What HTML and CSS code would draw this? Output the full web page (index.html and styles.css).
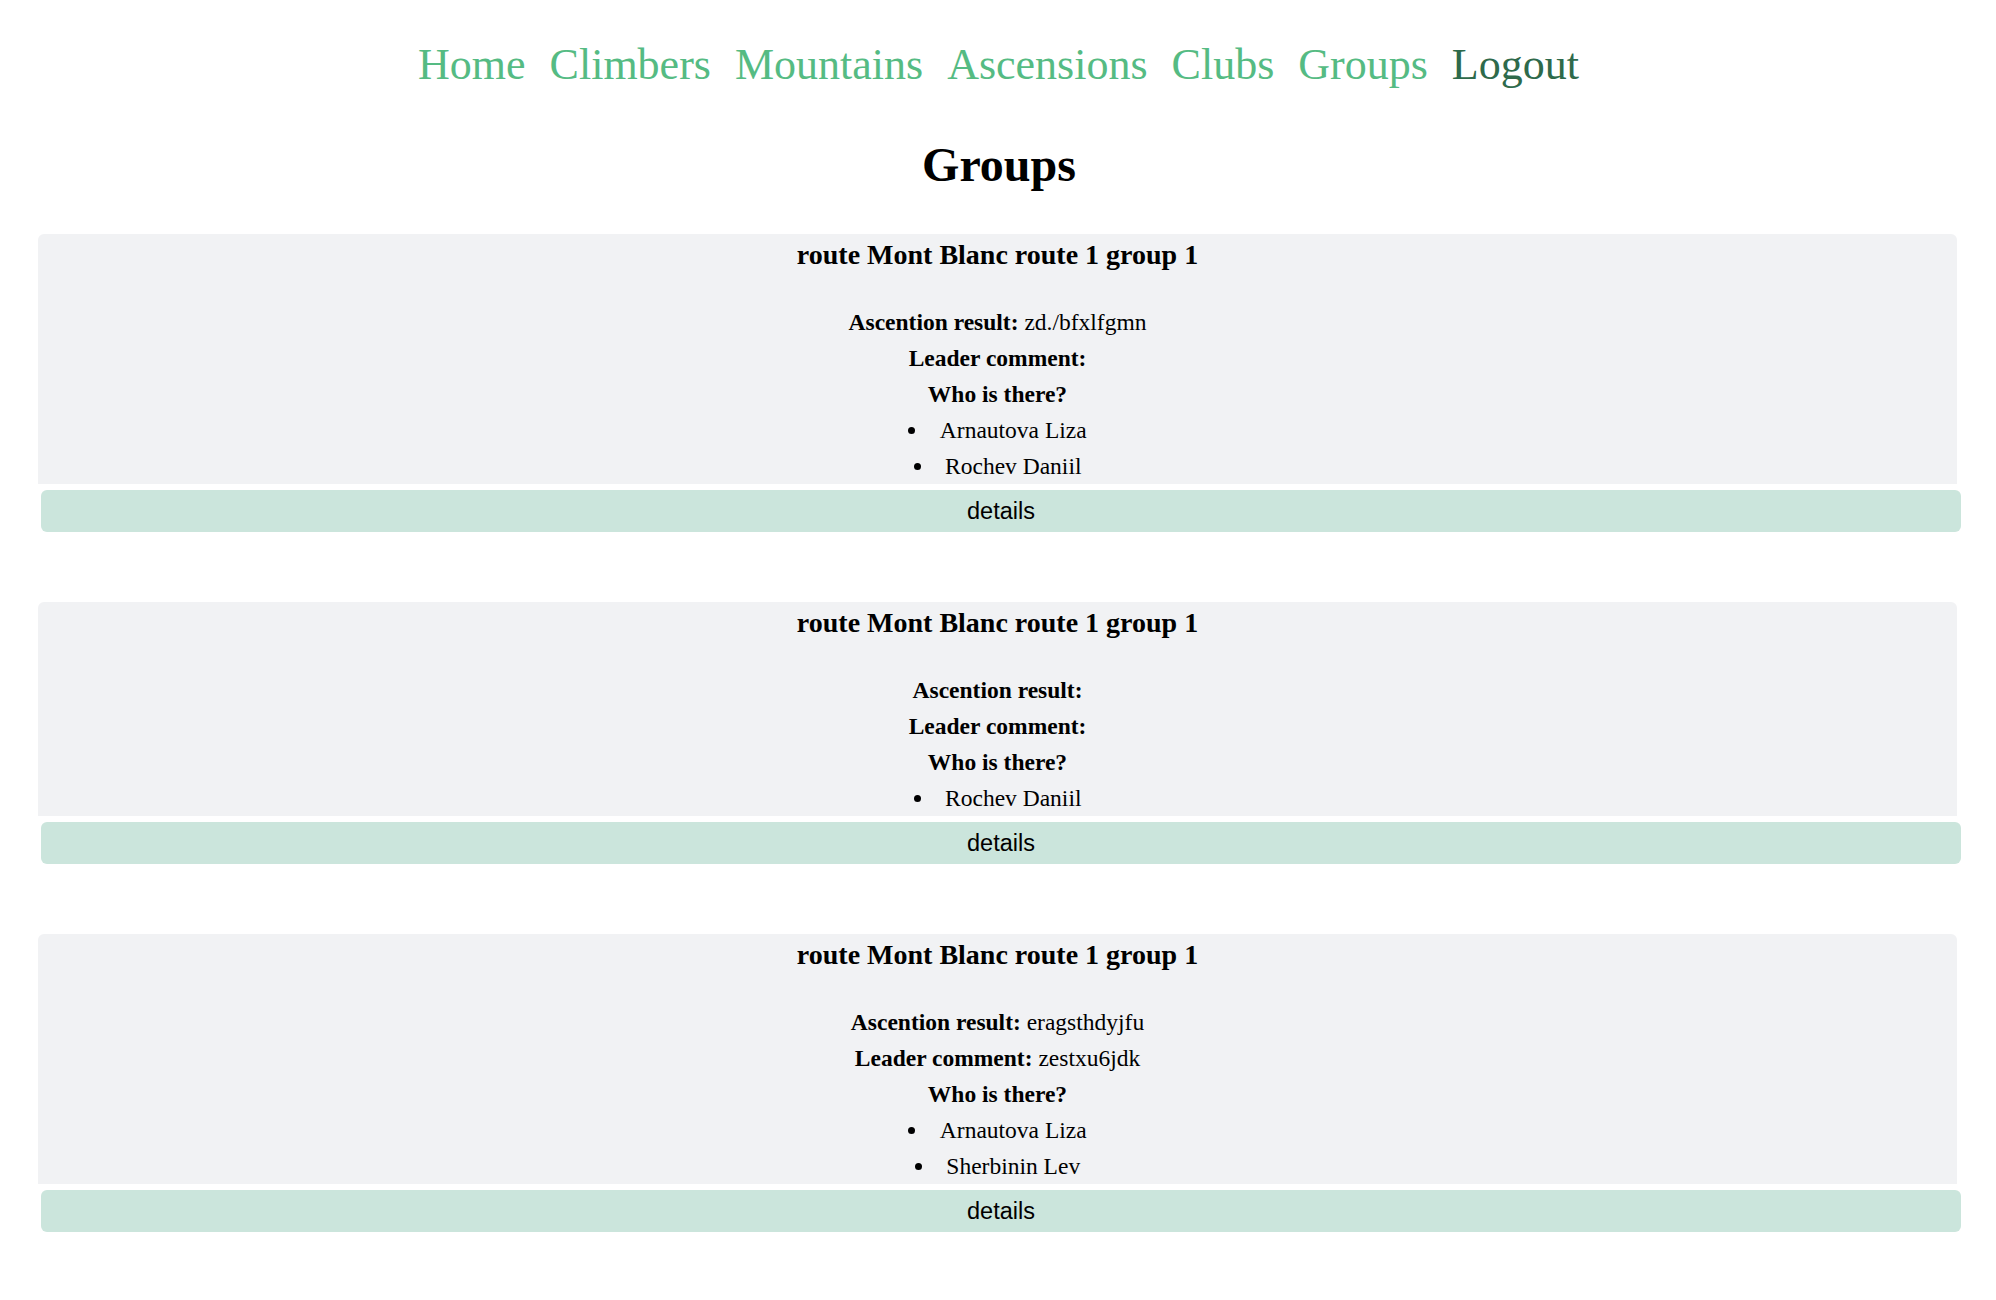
FILE: index.html
```html
<!DOCTYPE html>
<html>
<head>
<meta charset="utf-8">
<title>Groups</title>
<link rel="stylesheet" href="styles.css">
</head>
<body>
<nav class="nav">
  <a class="nav-link" href="#">Home</a>
  <a class="nav-link" href="#">Climbers</a>
  <a class="nav-link" href="#">Mountains</a>
  <a class="nav-link" href="#">Ascensions</a>
  <a class="nav-link" href="#">Clubs</a>
  <a class="nav-link" href="#">Groups</a>
  <a class="nav-link nav-logout" href="#">Logout</a>
</nav>
<h1 class="page-title">Groups</h1>
<main class="groups">
  <section class="group">
    <div class="card">
      <h3 class="card-title">route Mont Blanc route 1 group 1</h3>
      <div class="line"><b>Ascention result:</b> zd./bfxlfgmn</div>
      <div class="line"><b>Leader comment:</b></div>
      <div class="line"><b>Who is there?</b></div>
      <ul class="members">
        <li>Arnautova Liza</li>
        <li>Rochev Daniil</li>
      </ul>
    </div>
    <button class="details">details</button>
  </section>
  <section class="group">
    <div class="card">
      <h3 class="card-title">route Mont Blanc route 1 group 1</h3>
      <div class="line"><b>Ascention result:</b></div>
      <div class="line"><b>Leader comment:</b></div>
      <div class="line"><b>Who is there?</b></div>
      <ul class="members">
        <li>Rochev Daniil</li>
      </ul>
    </div>
    <button class="details">details</button>
  </section>
  <section class="group">
    <div class="card">
      <h3 class="card-title">route Mont Blanc route 1 group 1</h3>
      <div class="line"><b>Ascention result:</b> eragsthdyjfu</div>
      <div class="line"><b>Leader comment:</b> zestxu6jdk</div>
      <div class="line"><b>Who is there?</b></div>
      <ul class="members">
        <li>Arnautova Liza</li>
        <li>Sherbinin Lev</li>
      </ul>
    </div>
    <button class="details">details</button>
  </section>
</main>
</body>
</html>
```
FILE: styles.css
```css
html, body {
  margin: 0;
  padding: 0;
  background: #ffffff;
}

body {
  font-family: "Liberation Serif", "Times New Roman", serif;
  color: #000000;
}

.nav {
  display: flex;
  justify-content: center;
  gap: 24px;
  padding-top: 40px;
  font-size: 44px;
  line-height: 50px;
  margin-left: 1px;
}

.nav-link {
  color: #55bb83;
  text-decoration: none;
}

.nav-logout {
  color: #2e6a4b;
}

.page-title {
  margin: 49px 0 0 2px;
  font-size: 48px;
  line-height: 52px;
  font-weight: bold;
  text-align: center;
}

.groups {
  display: flex;
  flex-direction: column;
  gap: 70px;
  padding: 43px 0 40px 0;
}

.group {
  display: flex;
  flex-direction: column;
  gap: 6px;
}

.card {
  margin: 0 39px 0 38px;
  background: #f1f2f4;
  border-radius: 6px 6px 0 0;
  padding-top: 5px;
  text-align: center;
  font-size: 23.5px;
  line-height: 36px;
}

.card-title {
  margin: 0 0 33px 0;
  font-size: 28px;
  line-height: 32px;
  font-weight: bold;
}

.line {
  line-height: 36px;
}

.members {
  list-style: disc inside;
  margin: 0;
  padding: 0;
}

.members li {
  line-height: 36px;
}

.details {
  margin: 0 35px 0 41px;
  height: 42px;
  border: none;
  border-radius: 6px;
  background: #cbe5dc;
  color: #000000;
  font-family: "Liberation Sans", Arial, sans-serif;
  font-size: 23.5px;
  padding: 0;
  cursor: pointer;
}
```
